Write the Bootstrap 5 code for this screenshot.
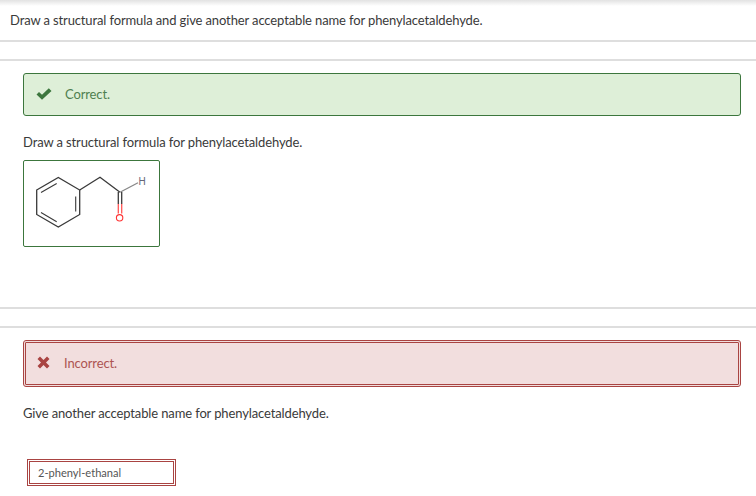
<!DOCTYPE html>
<html lang="en">
<head>
  <meta charset="UTF-8" />
  <meta name="viewport" content="width=device-width, initial-scale=1.0" />
  <title>Question result</title>
  <link href="https://cdn.jsdelivr.net/npm/bootstrap@5.3.5/dist/css/bootstrap.min.css" rel="stylesheet" />
  <style>
    html, body { height: 496px; overflow: hidden; }
    body { font-family: Lato, "Liberation Sans", sans-serif; font-size: 13px; line-height: 18px; color: #3a3a3a; letter-spacing: -0.125px; background: #fff; }
    .top-shade { height: 6px; background: linear-gradient(#e2e2e2, #fff); }
    .q-title { padding: 5px 10px 11px; border-bottom: 2px solid #dedede; }
    .q-part { border-top: 2px solid #dedede; margin-top: 17px; padding: 12px 15px 0 23px; }
    .q-part-first { height: 248px; }
    .q-part-second { margin-top: 0; }
    .part-rule { border-top: 2px solid #dedede; height: 19px; }
    .res-msg { height: 43px; border-radius: 3px; padding-left: 12px; gap: 13px; }
    .res-ok { background: #deefd8; border: 1px solid #3c763d; color: #4f7f50; padding-bottom: 2px; }
    .res-bad { height: 47px; background: #f2dede; border: 3px double #a94442; color: #ad5452; padding-left: 11px; gap: 14px; padding-bottom: 2px; }
    .res-prompt { margin: 17px 0 0; }
    .sketch-box { width: 137px; height: 87px; margin-top: 9px; border: 1px solid #3c763d; border-radius: 2px; }
    .name-box { width: 149px; height: 27px; margin: 37px 0 0 4px; padding-left: 8px; border: 3px double #a94442; font-size: 11.1px; letter-spacing: 0; color: #555; }
  </style>
</head>
<body>
  <div class="top-shade"></div>
  <div class="q-title">Draw a structural formula and give another acceptable name for phenylacetaldehyde.</div>

  <div class="q-part q-part-first">
    <div class="res-msg res-ok d-flex align-items-center">
      <svg width="16" height="12" viewBox="0 0 16 12"><path d="M0.5 6.5 L3 4 L6 6.8 L12.8 0.3 L15.5 3 L6 11.8 Z" fill="#3c763d"/></svg>
      <span>Correct.</span>
    </div>
    <p class="res-prompt">Draw a structural formula for phenylacetaldehyde.</p>
    <div class="sketch-box">
      <svg width="135" height="85" viewBox="0 0 135 85">
        <g fill="none" stroke="#3a3a3a" stroke-width="1.3">
          <path d="M12.7 29 L34.3 16.5 L55.7 29 L55.7 53.5 L34.3 66 L12.7 53.5 Z"/>
          <path d="M17 31.5 L32.7 22.5 M51.7 35.5 L51.7 50.5 M17 51.5 L32.7 60.8" stroke-width="1.1"/>
          <path d="M55.7 29 L76 16.3 L96 31.3"/>
          <path d="M96 31.3 L114 21.7" stroke="#888"/>
          <path d="M94.3 31 V43 M97.7 31 V43"/>
          <path d="M94.3 43 V52.5 M97.7 43 V52.5" stroke="#f55"/>
        </g>
        <circle cx="95.6" cy="56.8" r="3.2" fill="none" stroke="#f33" stroke-width="1.1"/>
        <text x="114.5" y="23.5" font-size="10" fill="#667" font-family="Liberation Sans, sans-serif">H</text>
      </svg>
    </div>
  </div>

  <div class="part-rule"></div>
  <div class="q-part q-part-second">
    <div class="res-msg res-bad d-flex align-items-center">
      <svg width="13" height="13" viewBox="0 0 13 13"><path d="M0.5 3 L3 0.5 L6.5 4 L10 0.5 L12.5 3 L9 6.5 L12.5 10 L10 12.5 L6.5 9 L3 12.5 L0.5 10 L4 6.5 Z" fill="#a94442"/></svg>
      <span>Incorrect.</span>
    </div>
    <p class="res-prompt">Give another acceptable name for phenylacetaldehyde.</p>
    <div class="name-box d-flex align-items-center">2-phenyl-ethanal</div>
  </div>

  <script src="https://cdn.jsdelivr.net/npm/bootstrap@5.3.5/dist/js/bootstrap.bundle.min.js"></script>
</body>
</html>
